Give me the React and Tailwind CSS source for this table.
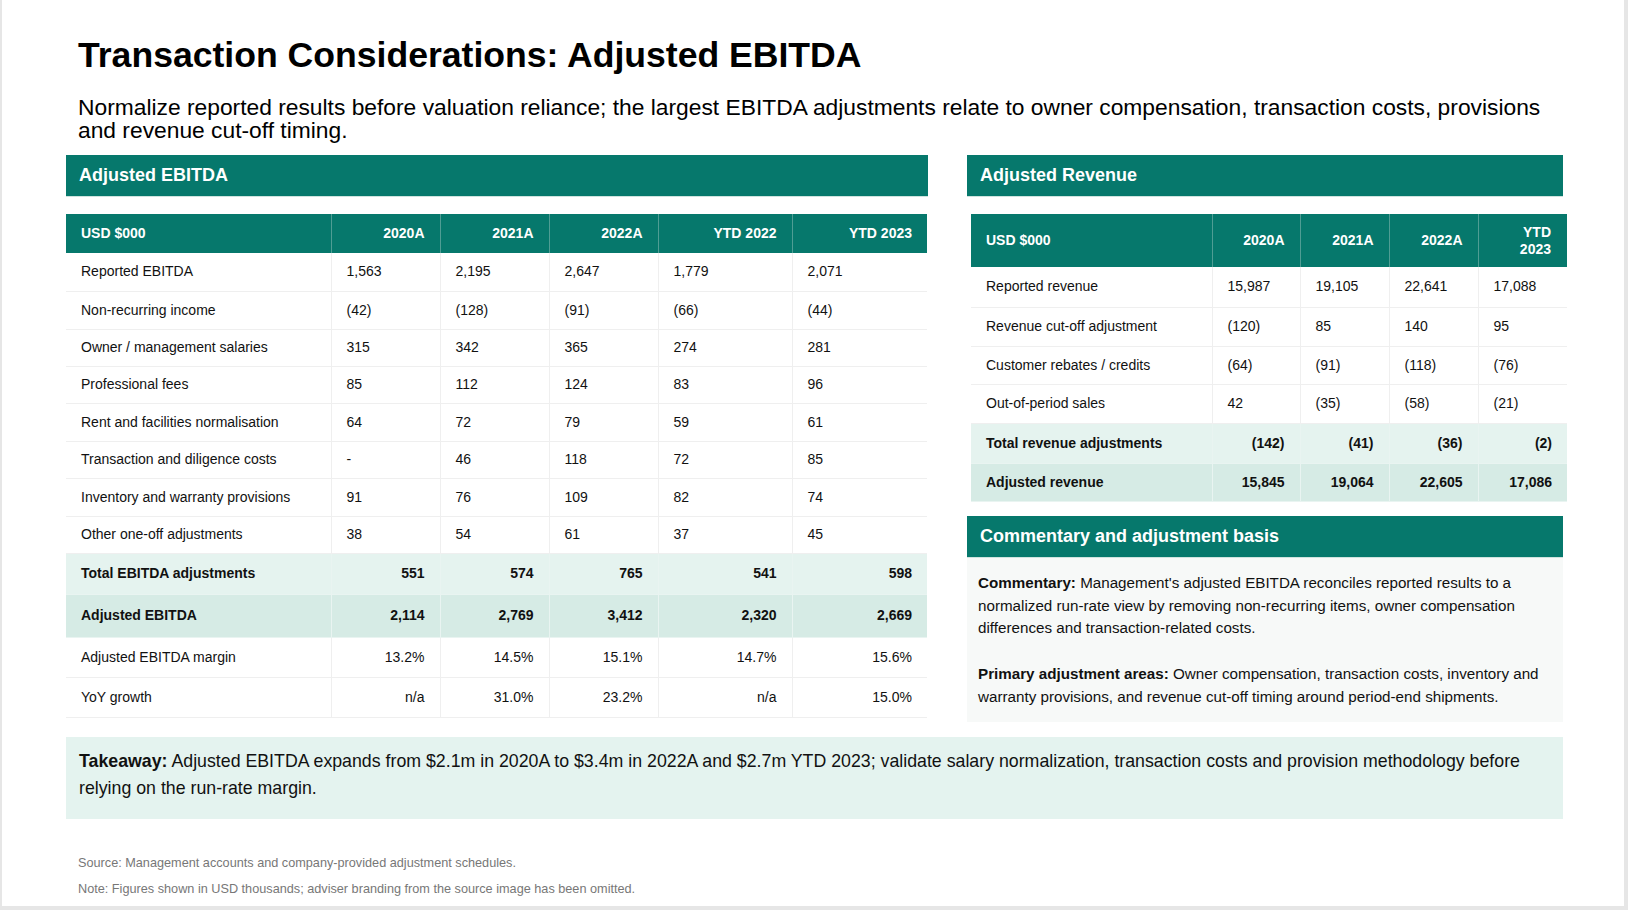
const ebitdaRows = [
  ['Reported EBITDA', '1,563', '2,195', '2,647', '1,779', '2,071'],
  ['Non-recurring income', '(42)', '(128)', '(91)', '(66)', '(44)'],
  ['Owner / management salaries', '315', '342', '365', '274', '281'],
  ['Professional fees', '85', '112', '124', '83', '96'],
  ['Rent and facilities normalisation', '64', '72', '79', '59', '61'],
  ['Transaction and diligence costs', '-', '46', '118', '72', '85'],
  ['Inventory and warranty provisions', '91', '76', '109', '82', '74'],
  ['Other one-off adjustments', '38', '54', '61', '37', '45'],
];
const ebitdaHeights = [38, 38, 37, 37, 38, 37, 38, 37];

const ebitdaSpecial = [
  { cells: ['Total EBITDA adjustments', '551', '574', '765', '541', '598'], bold: true, bg: 'bg-[#e5f3ef]', h: 41 },
  { cells: ['Adjusted EBITDA', '2,114', '2,769', '3,412', '2,320', '2,669'], bold: true, bg: 'bg-[#d6ebe5]', h: 43 },
  { cells: ['Adjusted EBITDA margin', '13.2%', '14.5%', '15.1%', '14.7%', '15.6%'], bold: false, bg: 'bg-white', h: 40 },
  { cells: ['YoY growth', 'n/a', '31.0%', '23.2%', 'n/a', '15.0%'], bold: false, bg: 'bg-white', h: 40 },
];

const revRows = [
  ['Reported revenue', '15,987', '19,105', '22,641', '17,088'],
  ['Revenue cut-off adjustment', '(120)', '85', '140', '95'],
  ['Customer rebates / credits', '(64)', '(91)', '(118)', '(76)'],
  ['Out-of-period sales', '42', '(35)', '(58)', '(21)'],
];
const revHeights = [40, 39, 38, 39];
const revSpecial = [
  { cells: ['Total revenue adjustments', '(142)', '(41)', '(36)', '(2)'], bg: 'bg-[#e5f3ef]', h: 40 },
  { cells: ['Adjusted revenue', '15,845', '19,064', '22,605', '17,086'], bg: 'bg-[#d6ebe5]', h: 38 },
];

function PanelHeader({ children }) {
  return (
    <div className="h-[42px] bg-[#06786c] border-b border-[#cfe3de] flex items-center pl-[13px] text-white font-bold text-[18px]">
      {children}
    </div>
  );
}

function App() {
  return (
    <div className="w-[1628px] h-[910px] bg-[#e6e6e6] overflow-hidden font-['Liberation_Sans',Arial,sans-serif]">
      <div className="ml-[2px] w-[1622px] h-[906px] bg-white pt-[34px] pl-[64px] text-[#111]">
        <div className="pl-[12px]">
          <h1 className="text-[35.6px] leading-[42px] font-bold text-black">Transaction Considerations: Adjusted EBITDA</h1>
          <p className="mt-[19.5px] w-[1478px] text-[22.8px] leading-[23px] text-black">
            Normalize reported results before valuation reliance; the largest EBITDA adjustments relate to owner compensation, transaction costs, provisions and revenue cut-off timing.
          </p>
        </div>

        <div className="mt-[13.5px] flex gap-[39px] w-[1497px] items-start">
          {/* Left panel */}
          <div className="w-[862px]">
            <PanelHeader>Adjusted EBITDA</PanelHeader>
            <table className="mt-[17px] w-[861px] table-fixed border-collapse text-[14px]">
              <colgroup>
                <col className="w-[265px]" />
                <col className="w-[109px]" />
                <col className="w-[109px]" />
                <col className="w-[109px]" />
                <col className="w-[134px]" />
                <col className="w-[135px]" />
              </colgroup>
              <thead>
                <tr className="h-[39px] bg-[#06786c] text-white font-bold">
                  <th className="text-left px-[15px] border-r border-[#4f9d94]">USD $000</th>
                  <th className="text-right px-[15px] border-r border-[#4f9d94]">2020A</th>
                  <th className="text-right px-[15px] border-r border-[#4f9d94]">2021A</th>
                  <th className="text-right px-[15px] border-r border-[#4f9d94]">2022A</th>
                  <th className="text-right px-[15px] border-r border-[#4f9d94]">YTD 2022</th>
                  <th className="text-right px-[15px]">YTD 2023</th>
                </tr>
              </thead>
              <tbody>
                {ebitdaRows.map((r, i) => (
                  <tr key={i} style={{ height: ebitdaHeights[i] }}>
                    {r.map((c, j) => (
                      <td key={j} className={`px-[15px] text-left border-b border-[#efefef] ${j < 5 ? 'border-r' : ''}`}>{c}</td>
                    ))}
                  </tr>
                ))}
                {ebitdaSpecial.map((r, i) => (
                  <tr key={'s' + i} className={`${r.bg} ${r.bold ? 'font-bold' : ''}`} style={{ height: r.h }}>
                    {r.cells.map((c, j) => (
                      <td key={j} className={`px-[15px] ${j === 0 ? 'text-left' : 'text-right'} border-b ${r.bold ? 'border-[#e9f4f1]' : 'border-[#efefef]'} ${j < 5 ? 'border-r' : ''}`}>{c}</td>
                    ))}
                  </tr>
                ))}
              </tbody>
            </table>
          </div>

          {/* Right panel */}
          <div className="w-[596px]">
            <PanelHeader>Adjusted Revenue</PanelHeader>
            <table className="mt-[17px] ml-[4px] w-[596px] table-fixed border-collapse text-[14px]">
              <colgroup>
                <col className="w-[241px]" />
                <col className="w-[88px]" />
                <col className="w-[89px]" />
                <col className="w-[89px]" />
                <col className="w-[89px]" />
              </colgroup>
              <thead>
                <tr className="h-[53px] bg-[#06786c] text-white font-bold leading-[17px]">
                  <th className="text-left px-[15px] border-r border-[#4f9d94]">USD $000</th>
                  <th className="text-right px-[15px] border-r border-[#4f9d94]">2020A</th>
                  <th className="text-right px-[15px] border-r border-[#4f9d94]">2021A</th>
                  <th className="text-right px-[15px] border-r border-[#4f9d94]">2022A</th>
                  <th className="text-right pl-[15px] pr-[16px]">YTD<br />2023</th>
                </tr>
              </thead>
              <tbody>
                {revRows.map((r, i) => (
                  <tr key={i} style={{ height: revHeights[i] }}>
                    {r.map((c, j) => (
                      <td key={j} className={`px-[15px] text-left border-b border-[#efefef] ${j < 4 ? 'border-r' : ''}`}>{c}</td>
                    ))}
                  </tr>
                ))}
                {revSpecial.map((r, i) => (
                  <tr key={'s' + i} className={`${r.bg} font-bold`} style={{ height: r.h }}>
                    {r.cells.map((c, j) => (
                      <td key={j} className={`px-[15px] ${j === 0 ? 'text-left' : 'text-right'} border-b border-[#e9f4f1] ${j < 4 ? 'border-r' : ''}`}>{c}</td>
                    ))}
                  </tr>
                ))}
              </tbody>
            </table>

            <div className="mt-[14px]">
              <PanelHeader>Commentary and adjustment basis</PanelHeader>
              <div className="bg-[#f7f9f8] pt-[14.5px] pb-[13px] pl-[11px] pr-[10px] text-[15.2px] leading-[22.7px] text-[#111]">
                <p>
                  <span className="font-bold">Commentary:</span> Management's adjusted EBITDA reconciles reported results to a normalized run-rate view by removing non-recurring items, owner compensation differences and transaction-related costs.
                </p>
                <p className="mt-[23px]">
                  <span className="font-bold">Primary adjustment areas:</span> Owner compensation, transaction costs, inventory and warranty provisions, and revenue cut-off timing around period-end shipments.
                </p>
              </div>
            </div>
          </div>
        </div>

        <div className="mt-[15px] w-[1497px] bg-[#e4f3ef] pt-[11.5px] pb-[16.5px] px-[13px] text-[17.75px] leading-[27px] text-[#111]">
          <span className="font-bold">Takeaway:</span> Adjusted EBITDA expands from $2.1m in 2020A to $3.4m in 2022A and $2.7m YTD 2023; validate salary normalization, transaction costs and provision methodology before relying on the run-rate margin.
        </div>

        <div className="pl-[12px] mt-[35px] text-[12.7px] leading-[18px] text-[#777]">
          <p>Source: Management accounts and company-provided adjustment schedules.</p>
          <p className="mt-[8px]">Note: Figures shown in USD thousands; adviser branding from the source image has been omitted.</p>
        </div>
      </div>
    </div>
  );
}

export default App;
